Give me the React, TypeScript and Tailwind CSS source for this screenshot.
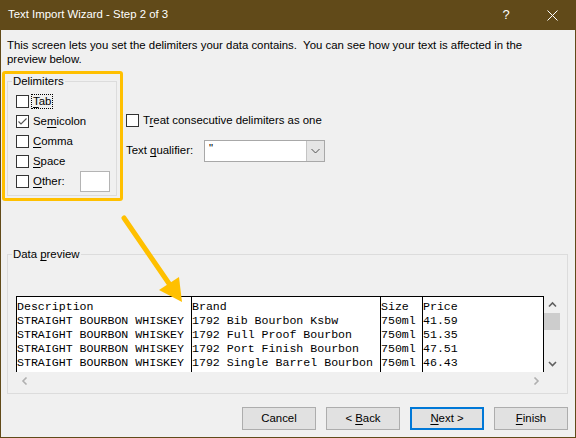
import React from "react";

function U({ children }: { children: React.ReactNode }) {
  return <span className="underline decoration-1 underline-offset-[2px]">{children}</span>;
}

function Box({ checked }: { checked?: boolean }) {
  return (
    <div className="relative w-[13px] h-[13px] flex-none border border-[#333333] bg-white">
      {checked && (
        <svg className="absolute left-0 top-0" width="11" height="11" viewBox="0 0 11 11">
          <polyline points="1.5,5.5 4,8 9.5,2.5" fill="none" stroke="#555555" strokeWidth="1.1" />
        </svg>
      )}
    </div>
  );
}

function Label({ children, focus }: { children: React.ReactNode; focus?: boolean }) {
  return (
    <span
      className={
        focus
          ? "border border-dotted border-black px-[1px] leading-[13px]"
          : "border border-transparent px-[1px] leading-[13px]"
      }
    >
      {children}
    </span>
  );
}

function Chev({ dir, color }: { dir: "up" | "down" | "left" | "right"; color: string }) {
  const pts =
    dir === "up"
      ? "1,5.5 4.5,2 8,5.5"
      : dir === "down"
      ? "1,2 4.5,5.5 8,2"
      : dir === "left"
      ? "5.5,0.5 2,4 5.5,7.5"
      : "2.5,0.5 6,4 2.5,7.5";
  const w = dir === "up" || dir === "down" ? 9 : 8;
  const h = 8;
  return (
    <svg width={w} height={h} viewBox={`0 0 ${w} ${h}`}>
      <polyline points={pts} fill="none" stroke={color} strokeWidth="1.6" />
    </svg>
  );
}

const col1 = ["Description", "STRAIGHT BOURBON WHISKEY", "STRAIGHT BOURBON WHISKEY", "STRAIGHT BOURBON WHISKEY", "STRAIGHT BOURBON WHISKEY"];
const col2 = ["Brand", "1792 Bib Bourbon Ksbw", "1792 Full Proof Bourbon", "1792 Port Finish Bourbon", "1792 Single Barrel Bourbon"];
const col3 = ["Size", "750ml", "750ml", "750ml", "750ml"];
const col4 = ["Price", "41.59", "51.35", "47.51", "46.43"];

function Col({ rows, className }: { rows: string[]; className: string }) {
  return (
    <div className={"flex flex-col pt-[3px] leading-[14px] whitespace-pre " + className}>
      {rows.map((r, i) => (
        <div key={i}>{r}</div>
      ))}
    </div>
  );
}

function Button({ children, primary }: { children: React.ReactNode; primary?: boolean }) {
  return (
    <div
      className={
        primary
          ? "w-[74px] h-[23px] flex items-center justify-center bg-[#e1e1e1] border-2 border-[#0078d7]"
          : "w-[74px] h-[23px] flex items-center justify-center bg-[#e1e1e1] border border-[#adadad]"
      }
    >
      <span className="whitespace-pre">{children}</span>
    </div>
  );
}

export default function App() {
  return (
    <div className="relative w-[576px] h-[438px] overflow-hidden bg-[#f0f0f0] border-x border-b border-[#614a19] flex flex-col text-black [font-family:'Liberation_Sans',Arial,sans-serif] text-[11.4px]">
      {/* Title bar */}
      <div className="h-[30px] flex-none bg-[#614a19] flex items-center text-white">
        <div className="flex-1 pl-[7px]">Text Import Wizard - Step 2 of 3</div>
        <div className="w-[46px] h-full flex items-center justify-center text-[13px]">?</div>
        <div className="w-[46px] h-full flex items-center justify-center">
          <svg width="11" height="11" viewBox="0 0 11 11">
            <line x1="0.5" y1="0.5" x2="10.5" y2="10.5" stroke="white" strokeWidth="1" />
            <line x1="10.5" y1="0.5" x2="0.5" y2="10.5" stroke="white" strokeWidth="1" />
          </svg>
        </div>
      </div>

      {/* Description */}
      <p className="pl-[6px] pt-[8px] leading-[14px] whitespace-pre">
        {"This screen lets you set the delimiters your data contains.  You can see how your text is affected in the"}
        <br />
        {"preview below."}
      </p>

      {/* Middle */}
      <div className="flex mt-[5px] ml-[1px] gap-[3px]">
        <div className="w-[121px] h-[130px] flex-none border-[3px] border-[#ffc000] rounded-[3px] pl-[2px]">
          <fieldset className="w-[110px] h-[122px] border border-[#dcdcdc]">
            <legend className="ml-[4px] px-[1px] leading-[14px]">Delimiters</legend>
            <div className="flex flex-col pl-[8px] pt-[3px]">
              <div className="h-[20px] flex items-center gap-[2px]">
                <Box />
                <Label focus>
                  <U>T</U>ab
                </Label>
              </div>
              <div className="h-[20px] flex items-center gap-[2px]">
                <Box checked />
                <Label>
                  Se<U>m</U>icolon
                </Label>
              </div>
              <div className="h-[20px] flex items-center gap-[2px]">
                <Box />
                <Label>
                  <U>C</U>omma
                </Label>
              </div>
              <div className="h-[20px] flex items-center gap-[2px]">
                <Box />
                <Label>
                  <U>S</U>pace
                </Label>
              </div>
              <div className="h-[21px] flex items-center gap-[2px]">
                <Box />
                <div className="w-[47px]">
                  <Label>
                    <U>O</U>ther:
                  </Label>
                </div>
                <div className="w-[30px] h-[21px] bg-white border border-[#b4b4b4]" />
              </div>
            </div>
          </fieldset>
        </div>

        <div className="flex flex-col pt-[40px]">
          <div className="h-[19px] flex items-center gap-[2px]">
            <Box />
            <Label>
              T<U>r</U>eat consecutive delimiters as one
            </Label>
          </div>
          <div className="mt-[10px] h-[22px] flex items-center">
            <div className="w-[78px]">
              Text <U>q</U>ualifier:
            </div>
            <div className="w-[121px] h-[22px] flex border border-[#a8a8a8] bg-white">
              <div className="flex-1 pl-[4px] leading-[14px]">"</div>
              <div className="w-[18px] h-full bg-[#e5e5e5] border-l border-[#c4c4c4] flex items-center justify-center">
                <svg width="9" height="6" viewBox="0 0 9 6">
                  <polyline points="0.5,1 4.5,5 8.5,1" fill="none" stroke="#505050" strokeWidth="1" />
                </svg>
              </div>
            </div>
          </div>
        </div>
      </div>

      {/* Data preview */}
      <fieldset className="mt-[46px] ml-[6px] w-[561px] h-[147px] border border-[#dcdcdc]">
        <legend className="ml-[4px] px-[1px] leading-[15px]">
          Data <U>p</U>review
        </legend>
        <div className="pl-[8px] pt-[34px]">
          <div className="w-[545px] flex flex-col">
            <div className="flex h-[76px]">
              <div className="w-[528px] h-[76px] flex bg-white border-l border-t border-r border-black overflow-hidden [font-family:'Liberation_Mono','Courier_New',monospace] text-[11.6px]">
                <Col rows={col1} className="w-[175px] border-r border-black" />
                <Col rows={col2} className="w-[189px] border-r border-black" />
                <Col rows={col3} className="w-[42px] border-r border-black" />
                <Col rows={col4} className="flex-1" />
              </div>
              <div className="w-[17px] h-[76px] flex flex-col bg-[#f0f0f0]">
                <div className="h-[17px] flex items-center justify-center">
                  <Chev dir="up" color="#606060" />
                </div>
                <div className="h-[17px] w-[16px] bg-[#cdcdcd]" />
                <div className="flex-1" />
                <div className="h-[17px] flex items-center justify-center">
                  <Chev dir="down" color="#606060" />
                </div>
              </div>
            </div>
            <div className="h-[17px] flex bg-[#f0f0f0]">
              <div className="w-[17px] flex items-center justify-center">
                <Chev dir="left" color="#b0b0b0" />
              </div>
              <div className="flex-1" />
              <div className="w-[17px] flex items-center justify-center">
                <Chev dir="right" color="#b0b0b0" />
              </div>
              <div className="w-[17px]" />
            </div>
          </div>
        </div>
      </fieldset>

      {/* Buttons */}
      <div className="mt-[13px] flex justify-end gap-[10px] pr-[7px]">
        <Button>Cancel</Button>
        <Button>
          {"< "}
          <U>B</U>ack
        </Button>
        <Button primary>
          <U>N</U>
          {"ext >"}
        </Button>
        <Button>
          <U>F</U>inish
        </Button>
      </div>

      {/* Annotation arrow */}
      <svg className="absolute left-[-1px] top-0 pointer-events-none" width="576" height="438" viewBox="0 0 576 438">
        <line x1="124" y1="218" x2="170" y2="285" stroke="#ffc000" strokeWidth="5" strokeLinecap="round" />
        <polygon points="159,290 179,277 182,302" fill="#ffc000" />
      </svg>
    </div>
  );
}
